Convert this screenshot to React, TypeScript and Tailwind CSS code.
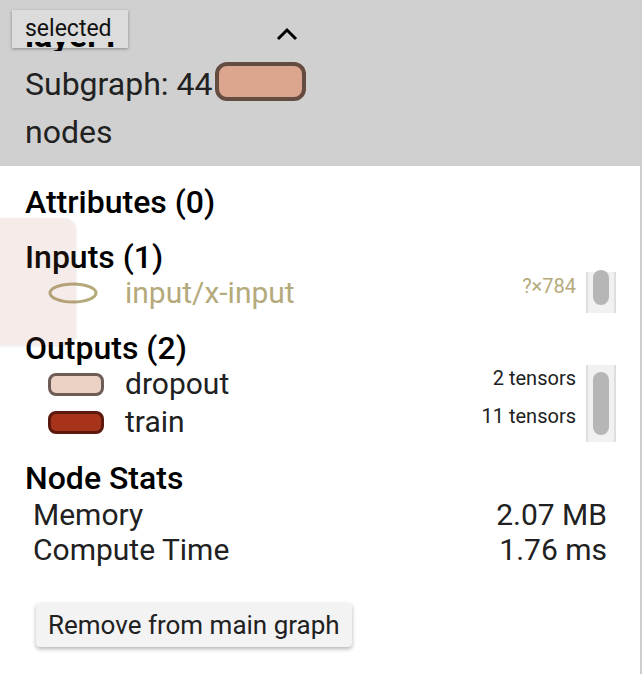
import React from "react";

function Scrollbar({ h, thumbTop, thumbH }: { h: string; thumbTop: string; thumbH: string }) {
  return (
    <div className={`w-[30px] ${h} bg-[#f1f1f1] border-x-2 border-[#dedede] flex flex-col items-center shrink-0`}>
      <div className={`w-[16px] ${thumbTop} ${thumbH} rounded-full bg-[#b6b6b6]`} />
    </div>
  );
}

export default function App() {
  return (
    <div className="w-[642px] h-[674px] bg-white relative overflow-hidden font-['Roboto',sans-serif] text-[#212121]">
      <div className="w-[642px] h-full border-r-2 border-[#cdcdcd] flex flex-col">
        {/* header */}
        <div className="h-[166px] bg-[#d0d0d0] pl-[25px] pt-[42px] shrink-0 flex flex-col">
          <div className="h-[9px] overflow-hidden relative z-10">
            <div className="mt-[-27px] text-[34px] leading-[40px] font-bold text-black">layer1</div>
          </div>
          <div className="flex items-start mt-[9px] h-[48px]">
            <span className="text-[32px] leading-[48px]">Subgraph: 44</span>
            <div className="ml-[3px] mt-[2px] w-[91px] h-[39px] rounded-[12px] border-4 border-[#654c40] bg-[#dca58e]" />
          </div>
          <div className="text-[32px] leading-[48px]">nodes</div>
        </div>

        {/* body */}
        <div className="pl-[25px] pt-[18px] flex flex-col">
          <div className="text-[32px] leading-[36px] h-[36px] font-medium text-black">Attributes (0)</div>
          <div className="text-[32px] leading-[36px] h-[36px] font-medium text-black mt-[19px]">Inputs (1)</div>
          <div className="flex h-[41px] mt-[-3px] mr-[24px]">
            <div className="flex-1 pt-[3px] pl-[23px]">
              <div className="flex items-center h-[36px]">
                <svg width="50" height="22" viewBox="0 0 50 22" className="shrink-0">
                  <ellipse cx="25" cy="11" rx="23" ry="9" fill="white" stroke="#b5aa7c" strokeWidth="3" />
                </svg>
                <span className="ml-[27px] text-[30px] leading-[36px] text-[#b5aa7c] flex-1">input/x-input</span>
                <span className="self-start mt-[1px] text-[20px] leading-[20px] text-[#b5aa7c] mr-[10px]">?×784</span>
              </div>
            </div>
            <Scrollbar h="h-[41px]" thumbTop="mt-[-2px]" thumbH="h-[35px]" />
          </div>

          <div className="text-[32px] leading-[36px] h-[36px] font-medium text-black mt-[17px]">Outputs (2)</div>
          <div className="flex h-[77px] mt-[-1px] mr-[24px]">
            <div className="flex-1 pl-[23px]">
              <div className="flex items-center h-[38px]">
                <div className="w-[56px] h-[23px] rounded-[8px] border-[3px] border-[#6e5d57] bg-[#ecd2c4] shrink-0" />
                <span className="ml-[21px] text-[30px] leading-[38px] flex-1">dropout</span>
                <span className="self-start mt-[3px] text-[20px] leading-[20px] mr-[10px]">2 tensors</span>
              </div>
              <div className="flex items-center h-[38px]">
                <div className="w-[56px] h-[23px] rounded-[8px] border-[3px] border-[#5b1a0d] bg-[#a8331b] shrink-0" />
                <span className="ml-[21px] text-[30px] leading-[38px] flex-1">train</span>
                <span className="self-start mt-[3px] text-[20px] leading-[20px] mr-[10px]">11 tensors</span>
              </div>
            </div>
            <Scrollbar h="h-[77px]" thumbTop="mt-[7px]" thumbH="h-[63px]" />
          </div>

          <div className="text-[32px] leading-[36px] h-[36px] font-medium text-black mt-[18px]">Node Stats</div>
          <div className="flex flex-col mt-[1px] pl-[8px] mr-[33px]">
            <div className="flex justify-between h-[35px] text-[30px] leading-[35px]">
              <span>Memory</span>
              <span>2.07 MB</span>
            </div>
            <div className="flex justify-between h-[35px] text-[30px] leading-[35px]">
              <span>Compute Time</span>
              <span>1.76 ms</span>
            </div>
          </div>
          <div className="mt-[36px] ml-[11px]">
            <button className="h-[44px] w-[316px] rounded-[4px] bg-[#f3f3f3] shadow-[0_2px_4px_rgba(0,0,0,0.3)] text-[26px] leading-[44px] text-[#212121] text-left pl-[12px]">
              Remove from main graph
            </button>
          </div>
        </div>
      </div>

      {/* chevron */}
      <svg className="absolute left-[276px] top-[26px]" width="22" height="15" viewBox="0 0 22 15">
        <polyline points="2,13 11,4 20,13" fill="none" stroke="black" strokeWidth="3" />
      </svg>

      {/* selected tooltip */}
      <div className="absolute left-[12px] top-[10px] w-[116px] h-[38px] bg-[#dcdcdc] shadow-[0_1px_3px_rgba(0,0,0,0.35)] text-[23px] leading-[38px] pl-[13px] text-[#111]">
        selected
      </div>

      {/* faded overlay */}
      <div className="absolute left-[-20px] top-[218px] w-[96px] h-[127px] rounded-[12px] bg-[rgba(175,102,88,0.13)] shadow-[0_1px_3px_rgba(0,0,0,0.1)]" />
    </div>
  );
}
